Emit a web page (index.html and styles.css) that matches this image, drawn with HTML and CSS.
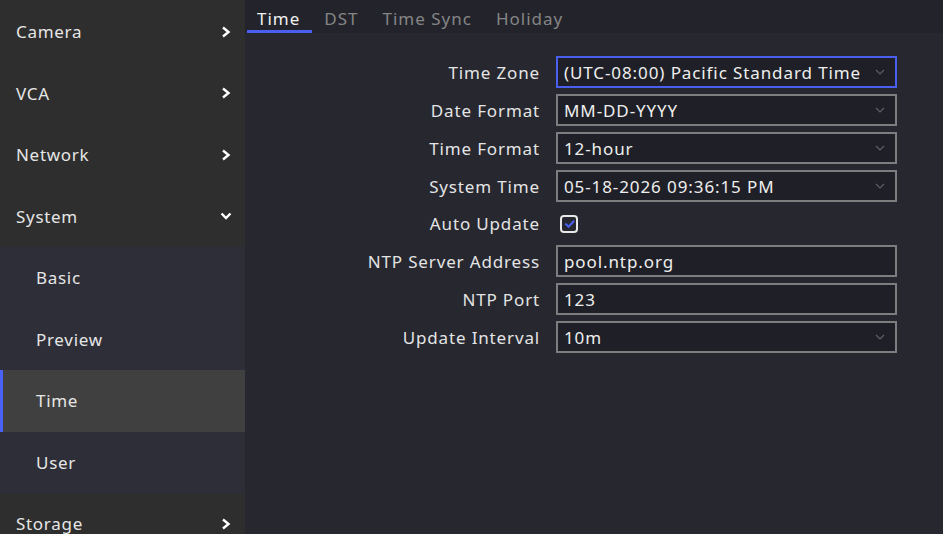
FILE: index.html
```html
<!DOCTYPE html>
<html lang="en">
<head>
    <meta charset="UTF-8">
    <title>Time Settings</title>
    <link rel="stylesheet" href="styles.css">
</head>
<body>

<div class="layout">
    <ul class="menu">
        <li class="menu-item">Camera <svg class="arrow" viewBox="0 0 10 12"><path d="M2 1.5 L7.5 6 L2 10.5"/></svg></li>
        <li class="menu-item">VCA <svg class="arrow" viewBox="0 0 10 12"><path d="M2 1.5 L7.5 6 L2 10.5"/></svg></li>
        <li class="menu-item">Network <svg class="arrow" viewBox="0 0 10 12"><path d="M2 1.5 L7.5 6 L2 10.5"/></svg></li>
        <li class="menu-item">System <svg class="arrow down" viewBox="0 0 12 10"><path d="M1.5 2.5 L6 7 L10.5 2.5"/></svg></li>
        <li class="menu-item sub">Basic</li>
        <li class="menu-item sub">Preview</li>
        <li class="menu-item sub active">Time</li>
        <li class="menu-item sub">User</li>
        <li class="menu-item">Storage <svg class="arrow" viewBox="0 0 10 12"><path d="M2 1.5 L7.5 6 L2 10.5"/></svg></li>
    </ul>

    <div class="main">
        <div class="tabs">
            <span class="tab active">Time</span>
            <span class="tab">DST</span>
            <span class="tab">Time Sync</span>
            <span class="tab">Holiday</span>
        </div>

        <div class="form">
            <label>Time Zone</label>
            <div class="field select focused">(UTC-08:00) Pacific Standard Time <svg class="caret" viewBox="0 0 10 6"><path d="M1 1 L5 5 L9 1"/></svg></div>

            <label>Date Format</label>
            <div class="field select">MM-DD-YYYY <svg class="caret" viewBox="0 0 10 6"><path d="M1 1 L5 5 L9 1"/></svg></div>

            <label>Time Format</label>
            <div class="field select">12-hour <svg class="caret" viewBox="0 0 10 6"><path d="M1 1 L5 5 L9 1"/></svg></div>

            <label>System Time</label>
            <div class="field select">05-18-2026 09:36:15 PM <svg class="caret" viewBox="0 0 10 6"><path d="M1 1 L5 5 L9 1"/></svg></div>

            <label>Auto Update</label>
            <div class="check-cell">
                <span class="checkbox"><svg viewBox="0 0 14 14"><path d="M2.5 7 L6 10.5 L12 4"/></svg></span>
            </div>

            <label>NTP Server Address</label>
            <div class="field">pool.ntp.org</div>

            <label>NTP Port</label>
            <div class="field">123</div>

            <label>Update Interval</label>
            <div class="field select">10m <svg class="caret" viewBox="0 0 10 6"><path d="M1 1 L5 5 L9 1"/></svg></div>
        </div>
    </div>
</div>

</body>
</html>
```

FILE: styles.css
```css
body {
    margin: 0;
    background-color: #26272f;
    font-family: 'Noto Sans', 'Open Sans', sans-serif;
    font-size: 17px;
    color: #e4e4e4;
    overflow: hidden;
}
.layout {
    display: flex;
    height: 534px;
}
.menu {
    list-style: none;
    margin: 0;
    padding: 1px 0 0 0;
    width: 245px;
    flex: 0 0 245px;
    background-color: #2e2e2e;
}
.menu-item {
    height: 61.5px;
    display: flex;
    align-items: center;
    justify-content: space-between;
    padding: 0 14px 0 16px;
    background-color: #2e2e2e;
    color: #e6e6e6;
    box-sizing: border-box;
    letter-spacing: 0.7px;
}
.menu-item.sub {
    background-color: #2d2e37;
    padding-left: 36px;
}
.menu-item.active {
    background-color: #404040;
    box-shadow: inset 3px 0 0 #4a62f5;
}
.arrow {
    width: 10px;
    height: 12px;
    fill: none;
    stroke: #ffffff;
    stroke-width: 2.4;
}
.arrow.down {
    width: 12px;
    height: 10px;
    margin-right: -1px;
}
.main {
    flex: 1;
    background-color: #26272f;
}
.tabs {
    display: flex;
    height: 33px;
    padding-left: 2px;
    background-color: #23242b;
}
.tab {
    padding: 9px 12px 0 12px;
    color: #858585;
    box-sizing: border-box;
    height: 33px;
    letter-spacing: 1px;
    line-height: 20px;
}
.tab.active {
    color: #f0f0f0;
    border-bottom: 3px solid #4a5ef0;
    padding-left: 10px;
    padding-right: 12px;
}
.form {
    display: grid;
    grid-template-columns: 295px 341px;
    column-gap: 16px;
    row-gap: 6px;
    margin-top: 23px;
    align-items: center;
}
.form label {
    text-align: right;
    letter-spacing: 0.85px;
}
.field {
    height: 32px;
    box-sizing: border-box;
    border: 2px solid #7d7d7f;
    background-color: #1f2027;
    padding: 0 6px;
    display: flex;
    align-items: center;
    justify-content: space-between;
    color: #eeeeee;
    letter-spacing: 0.9px;
}
.field.focused {
    border-color: #4a5ef0;
}
.caret {
    width: 10px;
    height: 6px;
    fill: none;
    stroke: #5e5e64;
    stroke-width: 1.2;
    margin-right: 4px;
}
.check-cell {
    height: 31px;
    display: flex;
    align-items: center;
    padding-left: 4px;
}
.checkbox {
    width: 14px;
    height: 14px;
    border: 2px solid #e8e8e8;
    border-radius: 4px;
    display: flex;
    align-items: center;
    justify-content: center;
}
.checkbox svg {
    width: 13px;
    height: 13px;
    fill: none;
    stroke: #4a5ef0;
    stroke-width: 2.2;
}
```
